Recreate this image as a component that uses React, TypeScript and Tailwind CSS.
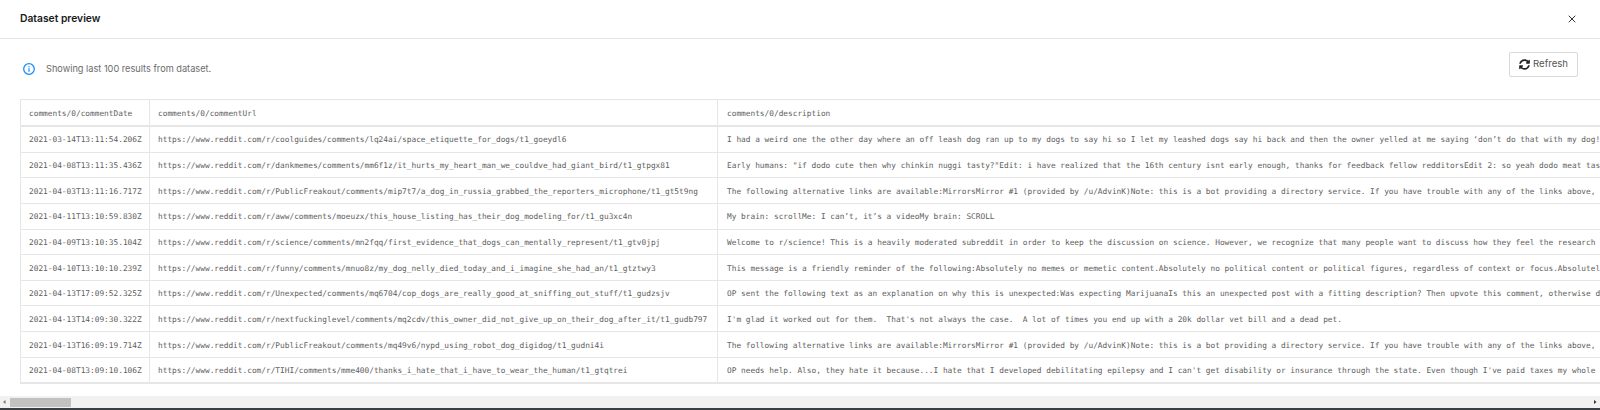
import { X } from "lucide-react";
import { FaSyncAlt } from "react-icons/fa";

const rows = [
  ["2021-03-14T13:11:54.206Z", "https://www.reddit.com/r/coolguides/comments/lq24ai/space_etiquette_for_dogs/t1_goeydl6", "I had a weird one the other day where an off leash dog ran up to my dogs to say hi so I let my leashed dogs say hi back and then the owner yelled at me saying ‘don’t do that with my dog!’ and walked away"],
  ["2021-04-08T13:11:35.436Z", "https://www.reddit.com/r/dankmemes/comments/mm6f1z/it_hurts_my_heart_man_we_couldve_had_giant_bird/t1_gtpgx81", "Early humans: \"if dodo cute then why chinkin nuggi tasty?\"Edit: i have realized that the 16th century isnt early enough, thanks for feedback fellow redditorsEdit 2: so yeah dodo meat tasted bad"],
  ["2021-04-03T13:11:16.717Z", "https://www.reddit.com/r/PublicFreakout/comments/mip7t7/a_dog_in_russia_grabbed_the_reporters_microphone/t1_gt5t9ng", "The following alternative links are available:MirrorsMirror #1 (provided by /u/AdvinK)Note: this is a bot providing a directory service. If you have trouble with any of the links above, please contact"],
  ["2021-04-11T13:10:59.830Z", "https://www.reddit.com/r/aww/comments/moeuzx/this_house_listing_has_their_dog_modeling_for/t1_gu3xc4n", "My brain: scrollMe: I can’t, it’s a videoMy brain: SCROLL"],
  ["2021-04-09T13:10:35.104Z", "https://www.reddit.com/r/science/comments/mn2fqq/first_evidence_that_dogs_can_mentally_represent/t1_gtv0jpj", "Welcome to r/science! This is a heavily moderated subreddit in order to keep the discussion on science. However, we recognize that many people want to discuss how they feel the research relates to their"],
  ["2021-04-10T13:10:10.239Z", "https://www.reddit.com/r/funny/comments/mnuo8z/my_dog_nelly_died_today_and_i_imagine_she_had_an/t1_gtztwy3", "This message is a friendly reminder of the following:Absolutely no memes or memetic content.Absolutely no political content or political figures, regardless of context or focus.Absolutely no hate speech"],
  ["2021-04-13T17:09:52.325Z", "https://www.reddit.com/r/Unexpected/comments/mq6704/cop_dogs_are_really_good_at_sniffing_out_stuff/t1_gudzsjv", "OP sent the following text as an explanation on why this is unexpected:Was expecting MarijuanaIs this an unexpected post with a fitting description? Then upvote this comment, otherwise downvote it please"],
  ["2021-04-13T14:09:30.322Z", "https://www.reddit.com/r/nextfuckinglevel/comments/mq2cdv/this_owner_did_not_give_up_on_their_dog_after_it/t1_gudb797", "I'm glad it worked out for them.  That's not always the case.  A lot of times you end up with a 20k dollar vet bill and a dead pet."],
  ["2021-04-13T16:09:19.714Z", "https://www.reddit.com/r/PublicFreakout/comments/mq49v6/nypd_using_robot_dog_digidog/t1_gudni4i", "The following alternative links are available:MirrorsMirror #1 (provided by /u/AdvinK)Note: this is a bot providing a directory service. If you have trouble with any of the links above, please contact"],
  ["2021-04-08T13:09:10.106Z", "https://www.reddit.com/r/TIHI/comments/mme400/thanks_i_hate_that_i_have_to_wear_the_human/t1_gtqtrei", "OP needs help. Also, they hate it because...I hate that I developed debilitating epilepsy and I can't get disability or insurance through the state. Even though I've paid taxes my whole life and worked"],
];

function Row({ cells, head }: { cells: string[]; head?: boolean }) {
  return (
    <div className={head ? "flex h-[27px] items-center border-b-2 border-[#e6e6e6]" : "flex h-[25.65px] items-center border-b border-[#e6e6e6]"}>
      <div className="flex h-full w-[129px] shrink-0 items-center border-r border-[#e6e6e6] pl-[8px] pt-[2px]">{cells[0]}</div>
      <div className="flex h-full w-[568px] shrink-0 items-center border-r border-[#e6e6e6] pl-[8px] pt-[2px]">{cells[1]}</div>
      <div className="flex h-full w-[1200px] shrink-0 items-center pl-[9px] pt-[2px]">{cells[2]}</div>
    </div>
  );
}

export default function App() {
  return (
    <div className="flex h-[410px] w-[1600px] flex-col overflow-hidden bg-white font-['Inter','Noto_Sans',sans-serif]">
      <div className="flex h-[39px] shrink-0 items-center justify-between border-b border-[#e6e6e6] pl-[20px] pr-[22px]">
        <span className="text-[10.3px] font-semibold text-[#1a1a1a]">Dataset preview</span>
        <X size={12} strokeWidth={2} className="text-[#333]" />
      </div>
      <div className="flex h-[60px] shrink-0 justify-between pl-[23px] pr-[22px]">
        <div className="flex items-center gap-[11px]">
          <svg width="12" height="12" viewBox="0 0 12 12" fill="none">
            <circle cx="6" cy="6" r="5.3" stroke="#1a8cff" strokeWidth="1.3" />
            <rect x="5.4" y="5.2" width="1.2" height="3.6" fill="#1a8cff" />
            <rect x="5.4" y="3.1" width="1.2" height="1.2" fill="#1a8cff" />
          </svg>
          <span className="text-[9.2px] text-[#6b6b6b]">Showing last 100 results from dataset.</span>
        </div>
        <button className="mt-[13px] flex h-[25px] w-[69px] items-center justify-center gap-[3px] rounded-[2px] border border-[#d9d9d9] text-[9.6px] text-[#555]">
          <FaSyncAlt size={11} className="text-[#222]" />
          Refresh
        </button>
      </div>
      <div className="ml-[20px] w-[1900px] shrink-0 whitespace-pre border-y border-l border-[#e6e6e6] font-['DejaVu_Sans_Mono',monospace] text-[7.8px] text-[#606060]">
        <Row head cells={["comments/0/commentDate", "comments/0/commentUrl", "comments/0/description"]} />
        {rows.map((r) => (
          <Row key={r[0]} cells={r} />
        ))}
      </div>
      <div className="mt-[12px] flex h-[12px] shrink-0 items-center bg-[#f1f1f1]">
        <svg width="10" height="12" viewBox="0 0 10 12" className="shrink-0"><path d="M5.5 4 L3 6 L5.5 8 Z" fill="#777" /></svg>
        <div className="h-[9px] w-[61px] bg-[#c1c1c1]" />
        <div className="flex-1" />
        <svg width="10" height="12" viewBox="0 0 10 12" className="shrink-0"><path d="M4 4 L6.5 6 L4 8 Z" fill="#333" /></svg>
      </div>
      <div className="h-[3px] shrink-0 bg-[#3a3f44]" />
    </div>
  );
}
